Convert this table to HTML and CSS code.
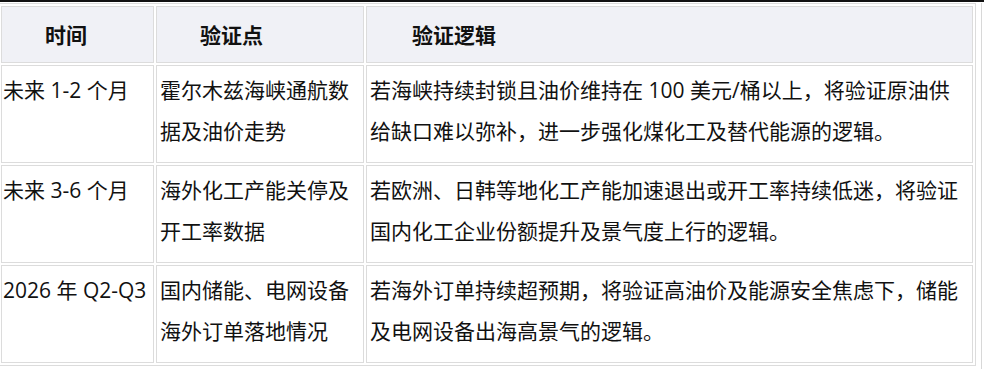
FILE: index.html
```html
<!DOCTYPE html>
<html lang="zh-CN">
<head>
<meta charset="utf-8">
<title>验证逻辑</title>
<link rel="stylesheet" href="styles.css">
</head>
<body>
<div class="topline"></div>
<div class="frame">
  <table class="grid">
    <thead>
      <tr>
        <th class="c1">时间</th>
        <th class="c2">验证点</th>
        <th class="c3">验证逻辑</th>
      </tr>
    </thead>
    <tbody>
      <tr>
        <td class="c1">未来 1-2 个月</td>
        <td class="c2">霍尔木兹海峡通航数据及油价走势</td>
        <td class="c3">若海峡持续封锁且油价维持在 100 美元/桶以上，将验证原油供给缺口难以弥补，进一步强化煤化工及替代能源的逻辑。</td>
      </tr>
      <tr>
        <td class="c1">未来 3-6 个月</td>
        <td class="c2">海外化工产能关停及开工率数据</td>
        <td class="c3">若欧洲、日韩等地化工产能加速退出或开工率持续低迷，将验证国内化工企业份额提升及景气度上行的逻辑。</td>
      </tr>
      <tr>
        <td class="c1">2026 年 Q2-Q3</td>
        <td class="c2">国内储能、电网设备海外订单落地情况</td>
        <td class="c3">若海外订单持续超预期，将验证高油价及能源安全焦虑下，储能及电网设备出海高景气的逻辑。</td>
      </tr>
    </tbody>
  </table>
</div>
</body>
</html>
```
FILE: styles.css
```css
html, body {
  margin: 0;
  padding: 0;
  background: #ffffff;
}
body {
  font-family: "Open Sans", "Noto Sans CJK SC", sans-serif;
  color: #111111;
  overflow: hidden;
}
.topline {
  height: 2px;
  background: #111111;
}
.frame {
  margin-top: 1px;
  margin-left: -2px;
  width: 983px;
  height: 366px;
  border-right: 1px solid #d8d8d8;
}
.grid {
  width: 978px;
  table-layout: fixed;
  border-collapse: separate;
  border-spacing: 2px;
  border: 1px solid #dcdcdc;
  font-size: 21px;
}
.grid th,
.grid td {
  box-sizing: border-box;
  border: 1px solid #dcdcdc;
  text-align: left;
}
.grid th {
  height: 57px;
  background: #f0f1f6;
  font-weight: bold;
  padding: 0 0 0 43px;
  vertical-align: middle;
  line-height: 30px;
}
.grid th.c3 {
  padding-left: 45px;
}
.grid td {
  height: 98px;
  vertical-align: top;
  line-height: 41px;
  padding: 4px 3px 10px 3px;
}
.grid td.c1 {
  padding-left: 1px;
  padding-right: 0;
}
.c1 { width: 153px; }
.c2 { width: 208px; }
.c3 { width: 607px; }
```
